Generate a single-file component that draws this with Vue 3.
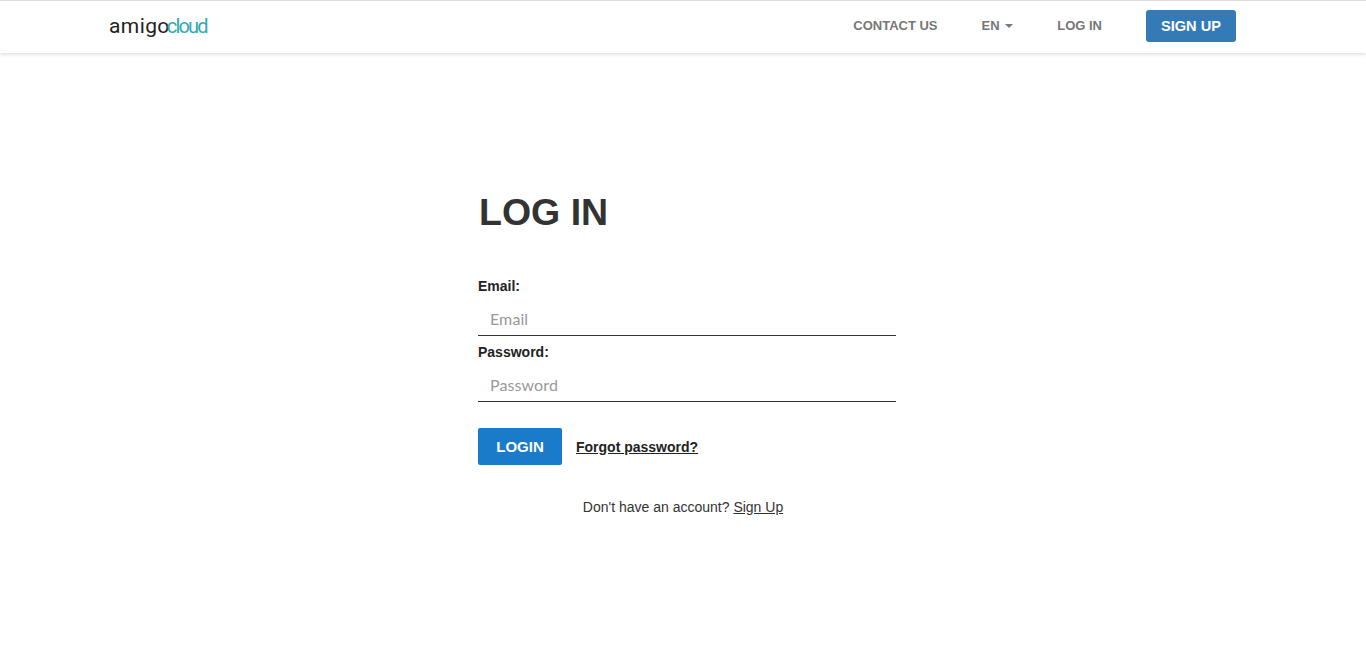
<script setup>
</script>

<template>
  <div class="page">
    <header class="nav">
      <div class="logo"><span class="dark">amigo</span><span class="teal">cloud</span></div>
      <nav class="links">
        <a class="link">CONTACT US</a>
        <a class="link">EN <i class="caret"></i></a>
        <a class="link">LOG IN</a>
        <a class="signup">SIGN UP</a>
      </nav>
    </header>
    <main class="main">
      <h1>LOG IN</h1>
      <form class="form" @submit.prevent>
        <label for="email">Email:</label>
        <input id="email" type="text" placeholder="Email" />
        <label for="password">Password:</label>
        <input id="password" type="password" placeholder="Password" />
        <div class="actions">
          <button type="submit">LOGIN</button>
          <a class="forgot">Forgot password?</a>
        </div>
        <p class="note">Don't have an account? <a>Sign Up</a></p>
      </form>
    </main>
  </div>
</template>

<style>
html, body { margin: 0; background: #fff; }
</style>

<style scoped>
.page {
  height: 655px;
  overflow: hidden;
  font-family: "Liberation Sans", Arial, sans-serif;
  color: #333;
  box-sizing: border-box;
}
.nav {
  height: 53px;
  box-sizing: border-box;
  border-top: 1px solid #ddd;
  box-shadow: 0 1px 4px rgba(0, 0, 0, 0.16);
  padding: 0 130px 0 109px;
  display: flex;
  align-items: center;
  justify-content: space-between;
}
.logo {
  font-family: Roboto, sans-serif;
  font-size: 21px;
  font-weight: 400;
  line-height: 26px;
  display: flex;
  align-items: baseline;
  margin-top: -2px;
}
.dark { color: #222; letter-spacing: 0.4px; }
.teal { color: #2fabb4; margin-left: -3px; font-size: 20px; letter-spacing: -1.8px; }
.links {
  display: flex;
  align-items: center;
  gap: 44px;
  margin-top: -2px;
}
.link {
  font-size: 13px;
  font-weight: 700;
  color: #777;
  white-space: nowrap;
  margin-top: -2px;
}
.caret {
  display: inline-block;
  width: 0;
  height: 0;
  margin-left: 2px;
  vertical-align: middle;
  border-top: 4px solid #777;
  border-left: 4px solid transparent;
  border-right: 4px solid transparent;
}
.signup {
  width: 90px;
  height: 32px;
  box-sizing: border-box;
  background: #337ab7;
  border-radius: 3px;
  color: #fff;
  font-size: 14.6px;
  font-weight: 700;
  display: flex;
  align-items: center;
  justify-content: center;
}
.main {
  width: 418px;
  margin: 0 auto;
  padding-top: 137px;
  position: relative;
  left: 4px;
}
h1 {
  margin: 0;
  font-size: 37.5px;
  line-height: 45px;
  font-weight: 700;
  color: #333;
  padding-left: 1px;
}
.form {
  display: flex;
  flex-direction: column;
  margin-top: 41px;
}
label {
  font-size: 14px;
  line-height: 20px;
  font-weight: 700;
  color: #222;
  height: 20px;
}
input {
  height: 36px;
  margin-top: 4px;
  margin-bottom: 6px;
  box-sizing: border-box;
  width: 100%;
  border: 0;
  border-bottom: 1px solid #333;
  padding: 2px 12px 0;
  font-family: Lato, sans-serif;
  font-size: 16px;
  letter-spacing: 0.1px;
  color: #333;
  outline: none;
  background: transparent;
}
input::placeholder { color: #999; opacity: 1; }
.actions {
  display: flex;
  align-items: center;
  gap: 14px;
  margin-top: 20px;
}
button {
  width: 84px;
  height: 37px;
  background: #1a7bcb;
  border: 0;
  border-radius: 2px;
  color: #fff;
  font-family: inherit;
  font-size: 15px;
  font-weight: 700;
}
.forgot {
  font-size: 14px;
  font-weight: 700;
  color: #222;
  text-decoration: underline;
}
.note {
  margin: 32px 0 0;
  text-align: center;
  font-size: 14px;
  line-height: 20px;
  color: #333;
  padding-right: 8px;
}
.note a { text-decoration: underline; }
</style>
